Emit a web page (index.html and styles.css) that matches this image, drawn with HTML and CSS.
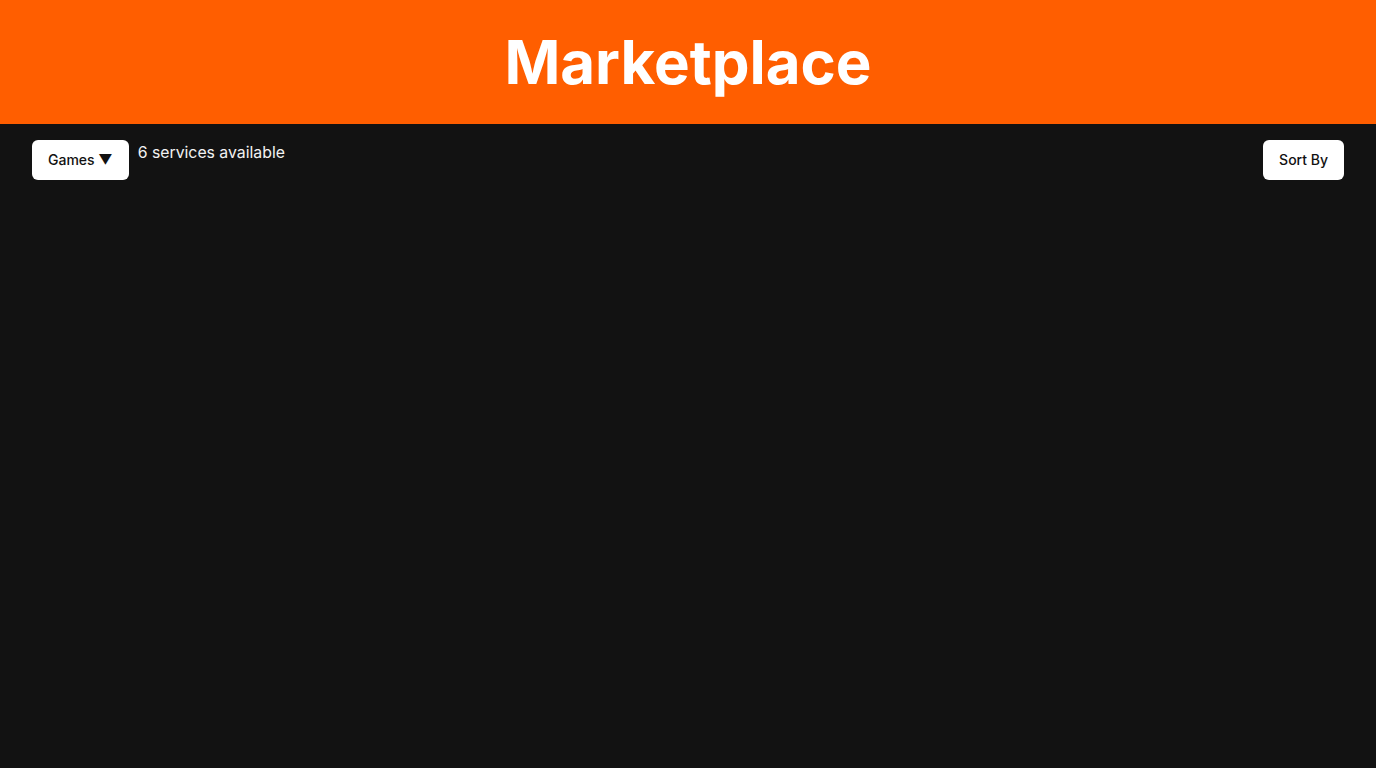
FILE: index.html
```html
<!DOCTYPE html>
<html lang="en">
<head>
<meta charset="utf-8">
<title>Marketplace</title>
<link rel="stylesheet" href="styles.css">
</head>
<body>
<header class="hero">
  <h1 class="hero-title">Marketplace</h1>
</header>
<main class="content">
  <div class="toolbar">
    <div class="toolbar-left">
      <button class="btn">Games ▼</button>
      <span class="count">6 services available</span>
    </div>
    <button class="btn">Sort By</button>
  </div>
</main>
</body>
</html>
```
FILE: styles.css
```css
* { box-sizing: border-box; }
html, body { margin: 0; padding: 0; height: 100%; }
body {
  background: #121212;
  font-family: Inter, "Noto Sans", sans-serif;
  color: #fff;
}
.hero {
  background: #ff5e00;
  height: 124px;
  display: flex;
  align-items: center;
  justify-content: center;
}
.hero-title {
  margin: 0;
  font-size: 60px;
  font-weight: 700;
  line-height: 1;
  color: #fff;
}
.toolbar {
  display: flex;
  justify-content: space-between;
  align-items: flex-start;
  padding: 16px 32px;
}
.toolbar-left {
  display: flex;
  align-items: flex-start;
  gap: 9px;
}
.btn {
  font-family: Inter, "Noto Sans", sans-serif;
  font-size: 14px;
  font-weight: 500;
  line-height: 20px;
  color: #111;
  background: #fff;
  border: none;
  border-radius: 6px;
  height: 40px;
  padding: 10px 16px;
}
.count {
  font-size: 15.8px;
  line-height: 26px;
  color: #f2f2f2;
}
```
